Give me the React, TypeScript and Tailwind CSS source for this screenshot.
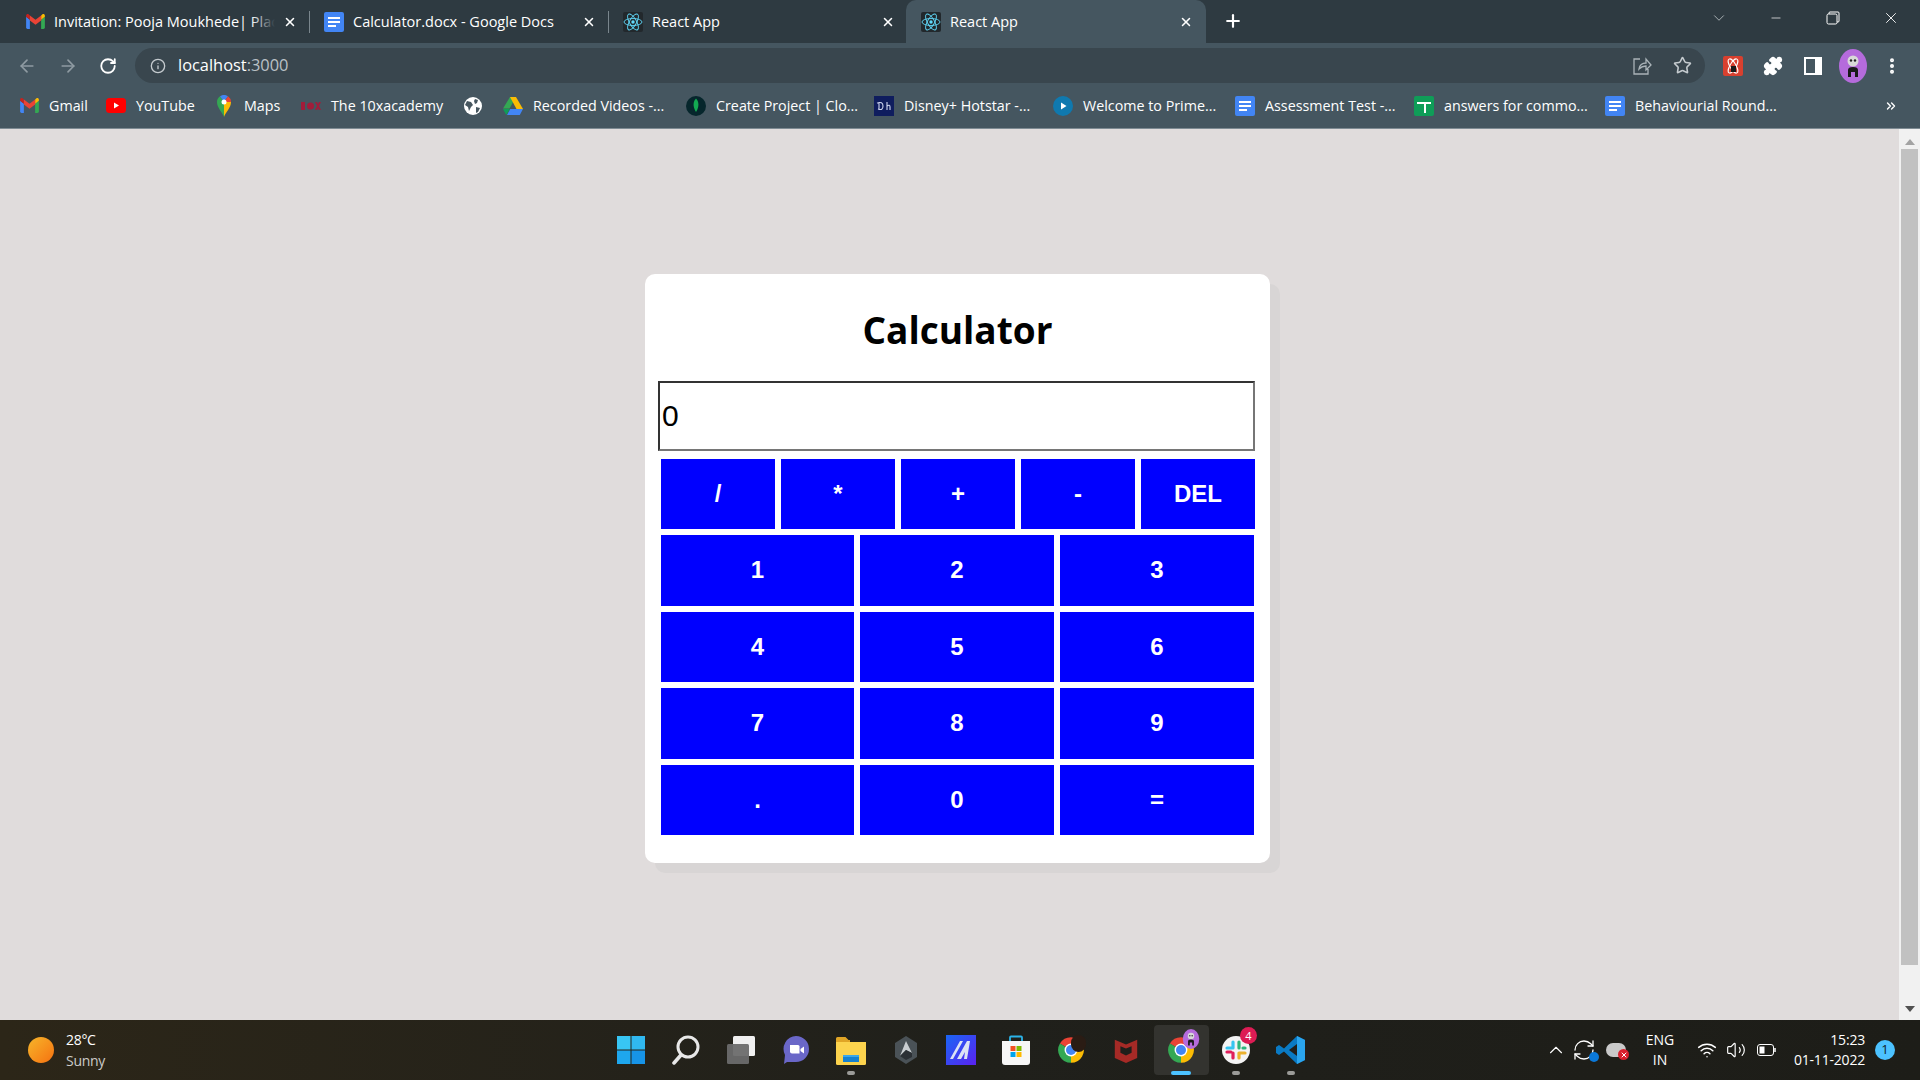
import React from 'react';
import { ArrowLeft, ArrowRight, RotateCw, RefreshCw, Info, Star, Puzzle, X, Plus, ChevronDown, ChevronUp, Minus, Wifi, Volume2, EllipsisVertical, ChevronsRight } from 'lucide-react';

const Docs = ({ cls = 'w-[20px] h-[20px]' }: { cls?: string }) => (
  <svg viewBox="0 0 20 20" className={cls}>
    <rect width="20" height="20" rx="2" fill="#4285f4" />
    <path d="M4 5h12v2H4zM4 9h12v2H4zM4 13h8v2H4z" fill="#fff" />
  </svg>
);

const Gmail = () => (
  <svg viewBox="0 0 20 16" className="w-[19px] h-[15px]">
    <path d="M0 3v11.5A1.5 1.5 0 0 0 1.5 16H4V6z" fill="#4285f4" />
    <path d="M20 3v11.5a1.5 1.5 0 0 1-1.5 1.5H16V6z" fill="#34a853" />
    <path d="M4 6 0 3V1.8C0 .3 1.700-.4 2.800.5L4 1.500z" fill="#c5221f" />
    <path d="M16 6l4-3V1.800C20 .3 18.300-.4 17.200.5L16 1.500z" fill="#fbbc04" />
    <path d="M4 7V1.500l6 4.500 6-4.500V7l-6 4.500z" fill="#ea4335" />
  </svg>
);

const ReactLogo = () => (
  <svg viewBox="0 0 20 20" className="w-[20px] h-[20px]">
    <rect width="20" height="20" rx="2" fill="#22282c" />
    <g fill="none" stroke="#61dafb" strokeWidth="0.9">
      <ellipse cx="10" cy="10" rx="9" ry="3.500" />
      <ellipse cx="10" cy="10" rx="9" ry="3.500" transform="rotate(60 10 10)" />
      <ellipse cx="10" cy="10" rx="9" ry="3.500" transform="rotate(120 10 10)" />
    </g>
    <circle cx="10" cy="10" r="1.700" fill="#61dafb" />
  </svg>
);

const Chrome = ({ children }: { children?: React.ReactNode }) => (
  <span className="relative block w-[28px] h-[28px]">
    <svg viewBox="0 0 24 24" className="w-[28px] h-[28px]">
      <path d="M12 12 2.470 6.500A11 11 0 0 1 21.530 6.500z" fill="#ea4335" />
      <path d="M12 12 21.530 6.500A11 11 0 0 1 12 23z" fill="#fbbc04" />
      <path d="M12 12 12 23A11 11 0 0 1 2.470 6.500z" fill="#34a853" />
      <circle cx="12" cy="12" r="5.500" fill="#fff" />
      <circle cx="12" cy="12" r="4.300" fill="#4285f4" />
    </svg>
    {children}
  </span>
);

const Avatar = ({ cls }: { cls: string }) => (
  <svg viewBox="0 0 28 34" className={cls}>
    <ellipse cx="14" cy="17" rx="14" ry="17" fill="#b56bdc" />
    <circle cx="14" cy="12" r="5.500" fill="#d9d9d9" />
    <circle cx="12" cy="11.500" r="1.200" fill="#222" />
    <circle cx="16" cy="11.500" r="1.200" fill="#222" />
    <path d="M9 28v-7q0-3 5-3t5 3v7h-3v-5h-4v5z" fill="#1a1a1a" />
  </svg>
);

type Tab = { title: string; icon: React.ReactNode; active?: boolean; sep?: boolean; fade?: boolean };

const tabs: Tab[] = [
  { title: 'Invitation: Pooja Moukhede| Placement', icon: <Gmail />, sep: true, fade: true },
  { title: 'Calculator.docx - Google Docs', icon: <Docs />, sep: true },
  { title: 'React App', icon: <ReactLogo /> },
  { title: 'React App', icon: <ReactLogo />, active: true },
];

const bookmarks: { label: string; w: string; icon: React.ReactNode; iconBox?: string }[] = [
  {
    label: 'Gmail',
    w: 'w-[87px]',
    icon: <Gmail />,
  },
  {
    label: 'YouTube',
    w: 'w-[111px]',
    icon: (
      <svg viewBox="0 0 20 15" className="w-[20px] h-[15px]">
        <rect width="20" height="15" rx="3.500" fill="#f00" />
        <path d="M8 4.500v6l5-3z" fill="#fff" />
      </svg>
    ),
  },
  {
    label: 'Maps',
    w: 'w-[84px]',
    icon: (
      <svg viewBox="0 0 14 22" className="w-[14px] h-[22px]">
        <path d="M7 22C5.500 17 0 13 0 7a7 7 0 0 1 3-5.700L7 7z" fill="#34a853" />
        <path d="M3 1.300A7 7 0 0 1 11 1.300L7 7z" fill="#4285f4" />
        <path d="M11 1.300A7 7 0 0 1 14 7L7 7z" fill="#ea4335" />
        <path d="M14 7c0 6-5.500 10-7 15L7 7z" fill="#fbbc04" />
        <circle cx="7" cy="7" r="2.500" fill="#fff" />
      </svg>
    ),
    iconBox: 'w-[14px] mr-[3px]',
  },
  {
    label: 'The 10xacademy',
    w: 'w-[162px]',
    icon: (
      <svg viewBox="0 0 20 10" className="w-[20px] h-[10px]">
        <g fill="#a11d3a">
          <rect x="0" y="1" width="4" height="8" />
          <circle cx="9.500" cy="5" r="3.500" />
          <path d="M14 1h2l1 2 1-2h2l-2 4 2 4h-2l-1-2-1 2h-2l2-4z" />
        </g>
      </svg>
    ),
  },
  {
    label: '',
    w: 'w-[40px]',
    icon: (
      <svg viewBox="0 0 18 18" className="w-[18px] h-[18px]">
        <circle cx="9" cy="9" r="9" fill="#fff" />
        <path d="M3 4l4 1 2 3-2 2-2 4-1-4-3-2zM11 2l3 1-1 3-2 1-1-3zM12 10l4 1-2 4-2 1z" fill="#46565f" />
      </svg>
    ),
  },
  {
    label: 'Recorded Videos -...',
    w: 'w-[183px]',
    icon: (
      <svg viewBox="0 0 20 18" className="w-[20px] h-[18px]">
        <path d="M7 0h6L6.500 11.500h-6.500z" fill="#34a853" />
        <path d="M7 0h6l7 12h-6.500z" fill="#fbbc04" />
        <path d="M4 18l3.200-6H20l-3.200 6z" fill="#4285f4" />
        <path d="M0 12l3.300 6 3.500-6z" fill="#0f9d58" />
      </svg>
    ),
  },
  {
    label: 'Create Project | Clo...',
    w: 'w-[188px]',
    icon: (
      <svg viewBox="0 0 20 20" className="w-[20px] h-[20px]">
        <circle cx="10" cy="10" r="10" fill="#06262c" />
        <path d="M10 2.500c3 3 3.500 8 0 13.500-3.500-5.500-3-10.500 0-13.500z" fill="#13aa52" />
      </svg>
    ),
  },
  {
    label: 'Disney+ Hotstar -...',
    w: 'w-[179px]',
    icon: (
      <svg viewBox="0 0 20 20" className="w-[20px] h-[20px]">
        <rect width="20" height="20" fill="#0f1d5e" />
        <path d="M3 7q6-2 6 3t-5 3M5 6v7M13 6v8M13 10q3-2 3 1v3" fill="none" stroke="#cfd6f0" strokeWidth="1.100" />
      </svg>
    ),
  },
  {
    label: 'Welcome to Prime...',
    w: 'w-[182px]',
    icon: (
      <svg viewBox="0 0 20 20" className="w-[20px] h-[20px]">
        <circle cx="10" cy="10" r="10" fill="#0f79af" />
        <path d="M8 6.500v7l5.500-3.500z" fill="#fff" />
      </svg>
    ),
  },
  {
    label: 'Assessment Test -...',
    w: 'w-[179px]',
    icon: <Docs />,
  },
  {
    label: 'answers for commo...',
    w: 'w-[191px]',
    icon: (
      <svg viewBox="0 0 20 20" className="w-[20px] h-[20px]">
        <rect width="20" height="20" rx="2" fill="#0f9d58" />
        <path d="M3 6h14v2h-5v9h-2V8H3z" fill="#fff" />
      </svg>
    ),
  },
  {
    label: 'Behaviourial Round...',
    w: 'w-[279px]',
    icon: <Docs />,
  },
];

const taskIcons: { key: string; dot?: boolean; active?: boolean; el: React.ReactNode }[] = [
  {
    key: 'start',
    el: (
      <svg viewBox="0 0 30 30" className="w-[30px] h-[30px]">
        <path d="M1 1h13.500v13.500H1z" fill="#38c6f4" />
        <path d="M15.500 1H29v13.500H15.500z" fill="#30b8f0" />
        <path d="M1 15.500h13.500V29H1z" fill="#1ea7ee" />
        <path d="M15.500 15.500H29V29H15.500z" fill="#1794e8" />
      </svg>
    ),
  },
  {
    key: 'search',
    el: (
      <svg viewBox="0 0 30 30" className="w-[30px] h-[30px]" fill="none">
        <circle cx="17" cy="12" r="10" stroke="#e8e8e8" strokeWidth="3" />
        <path d="M10 20 3 28" stroke="#e8e8e8" strokeWidth="3.500" strokeLinecap="round" />
      </svg>
    ),
  },
  {
    key: 'view',
    el: (
      <svg viewBox="0 0 30 30" className="w-[30px] h-[30px]">
        <rect x="7" y="1" width="22" height="20" rx="1.500" fill="#f0f0f0" />
        <rect x="1" y="9" width="22" height="20" rx="1.500" fill="#6b6b6b" fillOpacity="0.95" />
      </svg>
    ),
  },
  {
    key: 'chat',
    el: (
      <svg viewBox="0 0 30 30" className="w-[30px] h-[30px]">
        <path d="M15 1a13 13 0 0 1 0 26H6l-3 2 1-9A13 13 0 0 1 15 1z" fill="#6a67c8" />
        <path d="M9 10h8a1.500 1.500 0 0 1 1.500 1.500v7H11A2 2 0 0 1 9 16.500z" fill="#fff" />
        <path d="M19.500 14l3.500-2.500v7L19.500 16z" fill="#fff" />
      </svg>
    ),
  },
  {
    key: 'files',
    dot: true,
    el: (
      <svg viewBox="0 0 30 30" className="w-[30px] h-[30px]">
        <path d="M0 3.500A1.500 1.500 0 0 1 1.500 2h8l3 3H14v4H0z" fill="#e0a526" />
        <path d="M0 7h30v21.500a1.500 1.500 0 0 1-1.500 1.500h-27A1.500 1.500 0 0 1 0 28.500z" fill="#fcd34d" />
        <path d="M7 20h16v7H7z" fill="#1681d0" />
        <path d="M7 20h16v2H7z" fill="#3ba7ea" />
      </svg>
    ),
  },
  {
    key: 'hex',
    el: (
      <svg viewBox="0 0 30 30" className="w-[30px] h-[30px]">
        <path d="M15 1 26 8v14l-11 7-11-7V8z" fill="#4a5257" />
        <path d="M15 6l6 12-6-3-6 6z" fill="#c9ced1" />
        <path d="M15 15l6 3v4l-6 3-6-4z" fill="#2b3035" />
      </svg>
    ),
  },
  {
    key: 'editor',
    el: (
      <svg viewBox="0 0 30 30" className="w-[30px] h-[30px]">
        <defs>
          <linearGradient id="ed" x1="0" y1="0" x2="1" y2="1">
            <stop offset="0" stopColor="#1a66f5" />
            <stop offset="1" stopColor="#5a22f0" />
          </linearGradient>
        </defs>
        <rect width="30" height="30" fill="url(#ed)" />
        <path d="M4 24 14 6h3L7 24zM11 24 21 6h3l-3 18h-3l1-7-4 7z" fill="#dbe3f5" />
      </svg>
    ),
  },
  {
    key: 'store',
    el: (
      <svg viewBox="0 0 30 30" className="w-[30px] h-[30px]">
        <path d="M9 6V2.500A1 1 0 0 1 10 1.500h10a1 1 0 0 1 1 1V6" fill="none" stroke="#2bb3e8" strokeWidth="1.800" />
        <path d="M1 6h28v21a3 3 0 0 1-3 3H4a3 3 0 0 1-3-3z" fill="#f6f6f6" />
        <path d="M9.500 11h5v5h-5z" fill="#f25022" />
        <path d="M15.500 11h5v5h-5z" fill="#7fba00" />
        <path d="M9.500 17h5v5h-5z" fill="#00a4ef" />
        <path d="M15.500 17h5v5h-5z" fill="#ffb900" />
      </svg>
    ),
  },
  {
    key: 'chrome1',
    el: (
      <Chrome>
        <span className="absolute -top-[1px] -right-[1px] w-[15px] h-[17px] rounded-full bg-[#2a1c14]" />
      </Chrome>
    ),
  },
  {
    key: 'mcafee',
    el: (
      <svg viewBox="0 0 30 30" className="w-[28px] h-[30px]">
        <path d="M15 29 3 23.500V4l12 5 12-5v19.500z" fill="#a62a26" />
        <path d="M15 21l-6-3V11l6 2.500 6-2.500v7z" fill="#1f1f1b" />
      </svg>
    ),
  },
  {
    key: 'chrome2',
    active: true,
    el: (
      <Chrome>
        <Avatar cls="absolute -top-[7px] -right-[6px] w-[20px] h-[20px]" />
      </Chrome>
    ),
  },
  {
    key: 'slack',
    dot: true,
    el: (
      <span className="relative block w-[28px] h-[28px]">
        <svg viewBox="0 0 28 28" className="w-[28px] h-[28px]">
          <circle cx="14" cy="14" r="14" fill="#f4f4f4" />
          <g strokeWidth="3.200" strokeLinecap="round">
            <path d="M11 6v6M5 12h4" stroke="#36c5f0" />
            <path d="M17 6v6M21 12h2" stroke="#2eb67d" />
            <path d="M11 22v-5M5 16h4" stroke="#e01e5a" />
            <path d="M17 22v-5M17 17h6" stroke="#ecb22e" />
          </g>
        </svg>
        <span className="absolute -top-[9px] -right-[7px] w-[17px] h-[17px] rounded-full bg-[#dd1c54] text-white text-[11px] leading-[17px] text-center">4</span>
      </span>
    ),
  },
  {
    key: 'vscode',
    dot: true,
    el: (
      <svg viewBox="0 0 30 30" className="w-[30px] h-[30px]">
        <path d="M21 1 29 5v20l-8 4-13-12.500L3 20 0 18v-6l3-2 5 3.500z" fill="#0a7ac4" />
        <path d="M21 1 29 5v20l-8 4z" fill="#2aa5ee" />
        <path d="M21 9v12l-8-6z" fill="#1f1f1b" />
      </svg>
    ),
  },
];

const Browser = () => (
  <header className="flex-none font-['Open_Sans',sans-serif] text-white">
    {/* tab strip */}
    <div className="flex items-start h-[43px] pl-[10px] bg-[#2e3a41]">
      {tabs.map((tab, i) => (
        <div
          key={i}
          className={
            tab.active
              ? 'flex items-center w-[300px] h-[43px] pl-[15px] pr-[13px] -ml-[1px] rounded-t-[10px] bg-[#455660]'
              : 'flex items-center w-[299px] h-[43px] pl-[15px] pr-[12px]'
          }
        >
          <span className="flex-none flex justify-center w-[20px]">{tab.icon}</span>
          <span className="relative flex-1 ml-[9px] overflow-hidden whitespace-nowrap text-[14.500px]">
            {tab.title}
            {tab.fade && <span className="absolute inset-y-0 right-0 w-[24px] bg-gradient-to-r from-transparent to-[#2e3a41]" />}
          </span>
          <X className="flex-none w-[14px] h-[14px] ml-[8px]" strokeWidth={2.600} />
          {tab.sep && <span className="flex-none w-px h-[22px] ml-[12px] -mr-[13px] bg-[#7a868d]" />}
        </div>
      ))}
      <Plus className="w-[20px] h-[20px] mt-[11px] ml-[17px]" strokeWidth={2.600} />
      <div className="flex items-center h-[36px] ml-auto">
        <ChevronDown className="w-[18px] h-[18px] text-[#cfd4d7]" strokeWidth={1} />
        <Minus className="w-[14px] h-[14px] ml-[41px]" strokeWidth={1.200} />
        <svg viewBox="0 0 14 14" className="w-[14px] h-[14px] ml-[43px]" fill="none" stroke="#fff">
          <path d="M3 3V2a1 1 0 0 1 1-1h8a1 1 0 0 1 1 1v8a1 1 0 0 1-1 1h-1" />
          <rect x="1" y="3" width="10" height="10" rx="1.500" />
        </svg>
        <X className="w-[18px] h-[18px] ml-[42px] mr-[20px]" strokeWidth={1.200} />
      </div>
    </div>

    {/* toolbar */}
    <div className="flex items-center h-[40px] pt-[5px] bg-[#455660]">
      <ArrowLeft className="w-[20px] h-[20px] ml-[17px] text-[#8f9ba2]" />
      <ArrowRight className="w-[20px] h-[20px] ml-[21px] text-[#8f9ba2]" />
      <RotateCw className="w-[18px] h-[18px] ml-[21px] text-white" strokeWidth={2.400} />
      <div className="flex items-center w-[1570px] h-[35px] ml-[18px] pl-[15px] pr-[13px] rounded-full bg-[#39464e]">
        <Info className="w-[16px] h-[16px] text-[#c5cbcf]" />
        <span className="ml-[12px] text-[16.400px]">
          localhost<span className="text-[#b9c1c6]">:3000</span>
        </span>
        <svg viewBox="0 0 20 20" className="w-[20px] h-[20px] ml-auto" fill="none" stroke="#aab3b8" strokeWidth="1.300">
          <path d="M8 3H2v15h14v-5M7 13q1-6 7-6V3l5 6-5 5v-4q-4 0-7 3z" />
        </svg>
        <Star className="w-[19px] h-[19px] ml-[21px] text-[#c5cbcf]" />
      </div>
      <svg viewBox="0 0 20 20" className="w-[20px] h-[20px] ml-[18px]">
        <rect width="20" height="20" rx="2" fill="#d8402f" />
        <g fill="none" stroke="#fff" strokeWidth="1">
          <ellipse cx="10" cy="10" rx="8" ry="3" transform="rotate(60 10 10)" />
          <ellipse cx="10" cy="10" rx="8" ry="3" transform="rotate(120 10 10)" />
        </g>
        <path d="M8 10h5v6H8z" fill="#1a1a1a" />
      </svg>
      <Puzzle className="w-[20px] h-[20px] ml-[20px] text-white fill-white" />
      <svg viewBox="0 0 18 18" className="w-[18px] h-[18px] ml-[21px]">
        <path d="M0 0h18v18H0zM2 2v14h9V2z" fill="#fff" fillRule="evenodd" />
      </svg>
      <Avatar cls="w-[28px] h-[34px] ml-[17px]" />
      <EllipsisVertical className="w-[20px] h-[20px] ml-[15px] text-white" strokeWidth={2.800} />
    </div>

    {/* bookmarks */}
    <div className="flex items-center h-[46px] pl-[19px] bg-[#455660] border-b border-[#7e8b93] text-[14.300px]">
      {bookmarks.map((b) => (
        <div key={b.label || 'globe'} className={`flex-none flex items-center ${b.w}`}>
          <span className={`flex-none flex justify-center ${b.iconBox ?? 'w-[20px]'}`}>{b.icon}</span>
          {b.label && <span className="ml-[10px] whitespace-nowrap">{b.label}</span>}
        </div>
      ))}
      <ChevronsRight className="w-[14px] h-[14px]" strokeWidth={2.400} />
    </div>
  </header>
);

const topKeys = ['/', '*', '+', '-', 'DEL'];
const numKeys = ['1', '2', '3', '4', '5', '6', '7', '8', '9', '.', '0', '='];

const Calculator = () => (
  <div className="flex flex-col w-[625px] h-[589px] ml-[645px] mt-[145px] rounded-[10px] bg-white shadow-[10px_10px_0_#d8d5d5]">
    <h1 className="flex items-center justify-center h-[107px] pt-[5px] font-['Open_Sans',sans-serif] font-bold text-[37px] text-black">
      Calculator
    </h1>
    <input
      readOnly
      value="0"
      className="w-[597px] h-[70px] ml-[13px] px-[2px] border-2 border-t-[#333333] border-l-[#333333] border-r-[#767676] border-b-[#767676] font-['Liberation_Sans',sans-serif] text-[30px] text-black outline-none"
    />
    <div className="flex gap-[6px] mt-[8px] ml-[16px] font-['Liberation_Sans',sans-serif]">
      {topKeys.map((k) => (
        <button key={k} className="w-[114px] h-[70px] bg-[#0000ff] text-white font-bold text-[24px]">
          {k}
        </button>
      ))}
    </div>
    <div className="grid grid-cols-[193px_194px_194px] gap-[6px] mt-[6px] ml-[16px] font-['Liberation_Sans',sans-serif]">
      {numKeys.map((k) => (
        <button key={k} className="h-[70.500px] bg-[#0000ff] text-white font-bold text-[24px]">
          {k}
        </button>
      ))}
    </div>
  </div>
);

const Scrollbar = () => (
  <aside className="flex-none flex flex-col items-center w-[21px] bg-[#f1f1f1]">
    <span className="mt-[10px] w-0 h-0 border-x-[5px] border-x-transparent border-b-[6px] border-b-[#a3a3a3]" />
    <span className="w-[17px] h-[816px] mt-[4px] bg-[#c1c1c1]" />
    <span className="mt-[41px] w-0 h-0 border-x-[5px] border-x-transparent border-t-[6px] border-t-[#505050]" />
  </aside>
);

const Taskbar = () => (
  <footer className="flex-none grid grid-cols-[1fr_auto_1fr] items-center h-[60px] bg-gradient-to-r from-[#2c2618] via-[#20201b] to-[#1d1d18] font-['Open_Sans',sans-serif] text-white">
    <div className="flex items-center pl-[28px]">
      <span className="w-[26px] h-[26px] rounded-full bg-gradient-to-br from-[#f5b52a] to-[#f5700f]" />
      <div className="ml-[12px] text-[14px] leading-[21px] tracking-[-0.3px]">
        <div>28°C</div>
        <div className="text-[#cbcbc8]">Sunny</div>
      </div>
    </div>
    <div className="flex items-center pl-[2px]">
      {taskIcons.map((t) => (
        <div
          key={t.key}
          className={`relative flex items-center justify-center w-[55px] h-[50px] rounded-[4px] ${t.active ? 'bg-[#33332f]' : ''}`}
        >
          {t.el}
          {t.dot && <span className="absolute bottom-[0px] w-[8px] h-[4px] rounded-full bg-[#9b9b98]" />}
          {t.active && <span className="absolute bottom-[0px] w-[20px] h-[4px] rounded-full bg-[#4cc2ff]" />}
        </div>
      ))}
    </div>
    <div className="flex items-center justify-end pr-[25px]">
      <ChevronUp className="w-[22px] h-[22px]" strokeWidth={1.200} />
      <span className="relative ml-[5px]">
        <RefreshCw className="w-[24px] h-[24px]" strokeWidth={1.300} />
        <span className="absolute right-[-3px] bottom-[0px] w-[10px] h-[10px] rounded-full bg-[#0b78d8]" />
      </span>
      <span className="relative ml-[10px] w-[20px] h-[14px]">
        <span className="absolute inset-0 rounded-full bg-[#c9c9c9]" />
        <span className="absolute -right-[3px] -bottom-[3px] flex items-center justify-center w-[11px] h-[11px] rounded-full bg-[#d81f2d]">
          <X className="w-[8px] h-[8px]" strokeWidth={3} />
        </span>
      </span>
      <div className="w-[40px] ml-[14px] text-center text-[14px] leading-[20px]">
        <div>ENG</div>
        <div>IN</div>
      </div>
      <Wifi className="w-[20px] h-[20px] ml-[17px]" strokeWidth={1.800} />
      <Volume2 className="w-[20px] h-[20px] ml-[9px]" strokeWidth={1.400} />
      <svg viewBox="0 0 20 12" className="w-[20px] h-[12px] ml-[11px]" fill="none">
        <rect x="0.500" y="0.500" width="16" height="11" rx="2.500" stroke="#fff" />
        <rect x="2.500" y="2.500" width="5" height="7" fill="#fff" />
        <path d="M18 4v4" stroke="#fff" strokeWidth="1.500" />
      </svg>
      <div className="w-[80px] ml-[8px] text-right text-[14px] leading-[20px] tracking-[-0.2px]">
        <div>15:23</div>
        <div>01-11-2022</div>
      </div>
      <span className="flex items-center justify-center w-[20px] h-[20px] ml-[10px] rounded-full bg-[#4cc2ff] text-[13px] text-[#10222c]">1</span>
    </div>
  </footer>
);

const App = () => (
  <div className="flex flex-col h-screen overflow-hidden bg-[#e0dcdc]">
    <Browser />
    <main className="flex flex-1 min-h-0">
      <div className="flex-1 min-w-0">
        <Calculator />
      </div>
      <Scrollbar />
    </main>
    <Taskbar />
  </div>
);

export default App;
